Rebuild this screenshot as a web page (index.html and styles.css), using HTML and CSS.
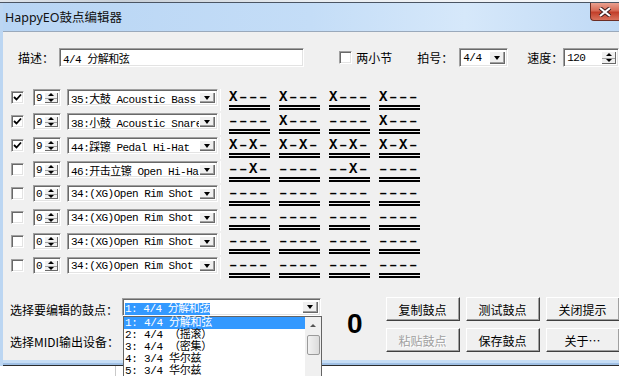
FILE: index.html
```html
<!DOCTYPE html>
<html lang="zh">
<head>
    <meta charset="UTF-8">
    <title>HappyEO鼓点编辑器</title>
    <link rel="stylesheet" href="styles.css">
</head>
<body>
<div class="screen">
    <div class="topstrip"></div>
    <div class="window">
        <div class="titlebar">
            <span class="title">HappyEO鼓点编辑器</span>
            <span class="close">
                <svg width="14" height="10" viewBox="0 0 14 10"><path d="M2 1 L12 9 M12 1 L2 9" stroke="#3a1a1a" stroke-width="4"/><path d="M2 1 L12 9 M12 1 L2 9" stroke="#fff" stroke-width="2.2"/></svg>
            </span>
        </div>
        <div class="client">
            <div class="toprow">
                <span class="label lbl-desc">描述：</span>
                <div class="field desc">4/4 分解和弦</div>
                <span class="check chk-two"></span>
                <span class="label lbl-two">两小节</span>
                <span class="label lbl-beat">拍号：</span>
                <div class="field combo beat"><span class="ctext">4/4</span><span class="arrowbtn"><i class="tri-down"></i></span></div>
                <span class="label lbl-speed">速度：</span>
                <div class="field spin speed"><span class="ctext">120</span><span class="spinbtn"><i class="tri-up"></i><i class="tri-down small"></i></span></div>
            </div>

            <div class="rows">
                <div class="row">
                    <span class="check on"><svg width="9" height="9" viewBox="0 0 9 9"><path d="M1 4 L3.5 6.5 L8 1.5" stroke="#000" stroke-width="1.8" fill="none"/></svg></span>
                    <div class="field spin small-spin"><span class="ctext">9</span><span class="spinbtn"><i class="tri-up"></i><i class="tri-down small"></i></span></div>
                    <div class="field combo instr"><span class="ctext">35:大鼓 Acoustic Bass</span><span class="arrowbtn"><i class="tri-down"></i></span></div>
                    <span class="sep"></span>
                    <div class="pattern">
                        <div class="cell"><span class="beats">X–––</span><span class="bars"></span></div>
                        <div class="cell"><span class="beats">X–––</span><span class="bars"></span></div>
                        <div class="cell"><span class="beats">X–––</span><span class="bars"></span></div>
                        <div class="cell"><span class="beats">X–––</span><span class="bars"></span></div>
                    </div>
                </div>
                <div class="row">
                    <span class="check on"><svg width="9" height="9" viewBox="0 0 9 9"><path d="M1 4 L3.5 6.5 L8 1.5" stroke="#000" stroke-width="1.8" fill="none"/></svg></span>
                    <div class="field spin small-spin"><span class="ctext">9</span><span class="spinbtn"><i class="tri-up"></i><i class="tri-down small"></i></span></div>
                    <div class="field combo instr"><span class="ctext">38:小鼓 Acoustic Snare</span><span class="arrowbtn"><i class="tri-down"></i></span></div>
                    <span class="sep"></span>
                    <div class="pattern">
                        <div class="cell"><span class="beats">––––</span><span class="bars"></span></div>
                        <div class="cell"><span class="beats">X–––</span><span class="bars"></span></div>
                        <div class="cell"><span class="beats">––––</span><span class="bars"></span></div>
                        <div class="cell"><span class="beats">X–––</span><span class="bars"></span></div>
                    </div>
                </div>
                <div class="row">
                    <span class="check on"><svg width="9" height="9" viewBox="0 0 9 9"><path d="M1 4 L3.5 6.5 L8 1.5" stroke="#000" stroke-width="1.8" fill="none"/></svg></span>
                    <div class="field spin small-spin"><span class="ctext">9</span><span class="spinbtn"><i class="tri-up"></i><i class="tri-down small"></i></span></div>
                    <div class="field combo instr"><span class="ctext">44:踩镲 Pedal Hi-Hat</span><span class="arrowbtn"><i class="tri-down"></i></span></div>
                    <span class="sep"></span>
                    <div class="pattern">
                        <div class="cell"><span class="beats">X–X–</span><span class="bars"></span></div>
                        <div class="cell"><span class="beats">X–X–</span><span class="bars"></span></div>
                        <div class="cell"><span class="beats">X–X–</span><span class="bars"></span></div>
                        <div class="cell"><span class="beats">X–X–</span><span class="bars"></span></div>
                    </div>
                </div>
                <div class="row">
                    <span class="check"></span>
                    <div class="field spin small-spin"><span class="ctext">9</span><span class="spinbtn"><i class="tri-up"></i><i class="tri-down small"></i></span></div>
                    <div class="field combo instr"><span class="ctext">46:开击立镲 Open Hi-Hat</span><span class="arrowbtn"><i class="tri-down"></i></span></div>
                    <span class="sep"></span>
                    <div class="pattern">
                        <div class="cell"><span class="beats">––X–</span><span class="bars"></span></div>
                        <div class="cell"><span class="beats">––––</span><span class="bars"></span></div>
                        <div class="cell"><span class="beats">––X–</span><span class="bars"></span></div>
                        <div class="cell"><span class="beats">––––</span><span class="bars"></span></div>
                    </div>
                </div>
                <div class="row">
                    <span class="check"></span>
                    <div class="field spin small-spin"><span class="ctext">0</span><span class="spinbtn"><i class="tri-up"></i><i class="tri-down small"></i></span></div>
                    <div class="field combo instr"><span class="ctext">34:(XG)Open Rim Shot</span><span class="arrowbtn"><i class="tri-down"></i></span></div>
                    <span class="sep"></span>
                    <div class="pattern">
                        <div class="cell"><span class="beats">––––</span><span class="bars"></span></div>
                        <div class="cell"><span class="beats">––––</span><span class="bars"></span></div>
                        <div class="cell"><span class="beats">––––</span><span class="bars"></span></div>
                        <div class="cell"><span class="beats">––––</span><span class="bars"></span></div>
                    </div>
                </div>
                <div class="row">
                    <span class="check"></span>
                    <div class="field spin small-spin"><span class="ctext">0</span><span class="spinbtn"><i class="tri-up"></i><i class="tri-down small"></i></span></div>
                    <div class="field combo instr"><span class="ctext">34:(XG)Open Rim Shot</span><span class="arrowbtn"><i class="tri-down"></i></span></div>
                    <span class="sep"></span>
                    <div class="pattern">
                        <div class="cell"><span class="beats">––––</span><span class="bars"></span></div>
                        <div class="cell"><span class="beats">––––</span><span class="bars"></span></div>
                        <div class="cell"><span class="beats">––––</span><span class="bars"></span></div>
                        <div class="cell"><span class="beats">––––</span><span class="bars"></span></div>
                    </div>
                </div>
                <div class="row">
                    <span class="check"></span>
                    <div class="field spin small-spin"><span class="ctext">0</span><span class="spinbtn"><i class="tri-up"></i><i class="tri-down small"></i></span></div>
                    <div class="field combo instr"><span class="ctext">34:(XG)Open Rim Shot</span><span class="arrowbtn"><i class="tri-down"></i></span></div>
                    <span class="sep"></span>
                    <div class="pattern">
                        <div class="cell"><span class="beats">––––</span><span class="bars"></span></div>
                        <div class="cell"><span class="beats">––––</span><span class="bars"></span></div>
                        <div class="cell"><span class="beats">––––</span><span class="bars"></span></div>
                        <div class="cell"><span class="beats">––––</span><span class="bars"></span></div>
                    </div>
                </div>
                <div class="row">
                    <span class="check"></span>
                    <div class="field spin small-spin"><span class="ctext">0</span><span class="spinbtn"><i class="tri-up"></i><i class="tri-down small"></i></span></div>
                    <div class="field combo instr"><span class="ctext">34:(XG)Open Rim Shot</span><span class="arrowbtn"><i class="tri-down"></i></span></div>
                    <span class="sep"></span>
                    <div class="pattern">
                        <div class="cell"><span class="beats">––––</span><span class="bars"></span></div>
                        <div class="cell"><span class="beats">––––</span><span class="bars"></span></div>
                        <div class="cell"><span class="beats">––––</span><span class="bars"></span></div>
                        <div class="cell"><span class="beats">––––</span><span class="bars"></span></div>
                    </div>
                </div>
            </div>

            <div class="bottom">
                <div class="selects">
                    <div class="selrow">
                        <span class="label lbl-pick">选择要编辑的鼓点：</span>
                        <div class="field combo pick">
                            <span class="ctext"><span class="selected">1: 4/4 分解和弦</span></span>
                            <span class="arrowbtn"><i class="tri-down"></i></span>
                            <div class="droplist">
                                <div class="items">
                                    <div class="item active">1: 4/4 分解和弦</div>
                                    <div class="item">2: 4/4 （摇滚）</div>
                                    <div class="item">3: 4/4 （密集）</div>
                                    <div class="item">4: 3/4 华尔兹</div>
                                    <div class="item">5: 3/4 华尔兹</div>
                                </div>
                                <div class="scrollbar">
                                    <span class="sb-up"><i class="tri-up"></i></span>
                                    <span class="sb-thumb"></span>
                                </div>
                            </div>
                        </div>
                    </div>
                    <span class="label lbl-midi">选择MIDI输出设备：</span>
                </div>
                <div class="count">0</div>
                <div class="buttons">
                    <button class="btn">复制鼓点</button>
                    <button class="btn">测试鼓点</button>
                    <button class="btn">关闭提示</button>
                    <button class="btn disabled">粘贴鼓点</button>
                    <button class="btn">保存鼓点</button>
                    <button class="btn">关于…</button>
                </div>
            </div>
        </div>
        <div class="frame-bottom"></div>
    </div>
    <div class="below"><span class="below-split"></span></div>
</div>
</body>
</html>
```
FILE: styles.css
```css
*{
    margin: 0px;
    padding: 0px;
    box-sizing: border-box;
}
body{
    width: 619px;
    height: 376px;
    overflow: hidden;
    background: #fff;
    font-family: "Noto Sans CJK SC", sans-serif;
    font-size: 12px;
    color: #000;
}
.screen{
    height: 376px;
    display: flex;
    flex-direction: column;
}
.topstrip{
    height: 3px;
    background: linear-gradient(to right, #dfe4ea, #c8cfd7 20%, #e9edf1 50%, #f6f7f9);
    border-bottom: 1px solid #4b5563;
}
.window{
    border-left: 3px solid #bcd6f2;
    box-shadow: inset 1px 0 0 #7f9dc4;
}
.titlebar{
    height: 28px;
    display: flex;
    align-items: center;
    justify-content: space-between;
    background: linear-gradient(to right, #b8d5f4, #c4ddf7 50%, #d6e8fa 75%, #bfd9f5);
}
.title{
    padding-left: 2px;
    margin-top: -2px;
    font-family: "Noto Sans", "Noto Sans CJK SC", sans-serif;
    font-size: 12.5px;
    color: #111;
}
.close{
    align-self: flex-start;
    width: 29px;
    height: 18px;
    display: flex;
    align-items: center;
    justify-content: center;
    border: 1px solid #6b2d24;
    border-right: none;
    border-top: none;
    border-radius: 0 0 0 4px;
    background: linear-gradient(to bottom, #e9a08f, #d66a55 45%, #c23f2a 55%, #d9735c);
}
.client{
    height: 329px;
    background: #f0f0f0;
    border-top: 1px solid #9aa9bb;
    padding: 15px 0 0 8px;
}
.frame-bottom{
    height: 6px;
    background: linear-gradient(to bottom, #c6ddf5 0, #c6ddf5 3px, #9fbfe4 3px, #9fbfe4 5px, #2b2b2b 5px);
}
.below{
    flex: 1;
    background: #fff;
    position: relative;
}
.below-split{
    position: absolute;
    left: 115px;
    top: 0;
    bottom: 0;
    border-left: 1px solid #c9c9c9;
}

/* generic controls */
.label{
    line-height: 19px;
    white-space: nowrap;
}
.field{
    background: #fff;
    border-top: 1px solid #a0a0a0;
    border-left: 1px solid #a0a0a0;
    border-right: 1px solid #fff;
    border-bottom: 1px solid #fff;
    box-shadow: inset 1px 1px 0 #696969, inset -1px -1px 0 #e3e3e3;
    display: flex;
    align-items: center;
    font-family: "Liberation Mono", "Noto Sans CJK SC", monospace;
    font-size: 11px;
    letter-spacing: -0.5px;
    position: relative;
}
.ctext{
    flex: 1;
    padding-left: 3px;
    white-space: nowrap;
    overflow: hidden;
}
.arrowbtn{
    width: 16px;
    height: 100%;
    border: 2px solid;
    border-color: #f0f0f0 #f0f0f0 #f0f0f0 #f0f0f0;
    background: #f0f0f0;
    box-shadow: inset 1px 1px 0 #fff, inset -1px -1px 0 #696969;
    display: flex;
    align-items: center;
    justify-content: center;
    margin-right: 1px;
    background-clip: padding-box;
}
.field .arrowbtn{
    border: none;
    height: calc(100% - 4px);
    margin: 2px 2px 2px 0;
    box-shadow: inset 1px 1px 0 #fff, inset -1px -1px 0 #696969, inset -2px -2px 0 #a0a0a0;
}
.spinbtn{
    width: 14px;
    height: calc(100% - 4px);
    margin: 2px 2px 2px 0;
    display: flex;
    flex-direction: column;
    align-items: center;
    justify-content: space-around;
    background: #f0f0f0;
    box-shadow: inset 1px 1px 0 #fff, inset -1px -1px 0 #696969;
    position: relative;
}
.spinbtn::after{
    content: "";
    position: absolute;
    left: 1px;
    right: 1px;
    top: 50%;
    border-top: 1px solid #a0a0a0;
}
.tri-down{
    width: 0;
    height: 0;
    border-left: 3.5px solid transparent;
    border-right: 3.5px solid transparent;
    border-top: 4px solid #000;
}
.tri-down.small{
    border-left-width: 3px;
    border-right-width: 3px;
    border-top-width: 3px;
}
.tri-up{
    width: 0;
    height: 0;
    border-left: 3px solid transparent;
    border-right: 3px solid transparent;
    border-bottom: 3px solid #000;
}
.check{
    width: 13px;
    height: 13px;
    background: #fff;
    border-top: 1px solid #a0a0a0;
    border-left: 1px solid #a0a0a0;
    border-right: 1px solid #fff;
    border-bottom: 1px solid #fff;
    box-shadow: inset 1px 1px 0 #696969, inset -1px -1px 0 #e3e3e3;
    display: flex;
    align-items: center;
    justify-content: center;
    flex: none;
}

/* top row */
.toprow{
    display: flex;
    align-items: center;
    height: 19px;
    margin-top: 1px;
}
.lbl-desc{ margin-left: 7px; width: 41px; }
.desc{
    width: 246px;
    height: 19px;
    padding-left: 3px;
}
.chk-two{ margin-left: 35px; }
.lbl-two{ margin-left: 4px; width: 36px; }
.lbl-beat{ margin-left: 25px; width: 42px; }
.beat{ width: 49px; height: 19px; }
.lbl-speed{ margin-left: 19px; width: 36px; }
.speed{ width: 56px; height: 19px; }
.speed .spinbtn{ width: 15px; }

/* instrument rows */
.rows{
    margin-top: 22px;
    display: flex;
    flex-direction: column;
}
.row{
    height: 24px;
    display: flex;
    align-items: flex-start;
}
.row .check{
    margin-top: 2px;
}
.small-spin{
    margin-left: 9px;
    width: 28px;
    height: 17px;
}
.small-spin .ctext{
    padding-left: 2px;
}
.instr{
    margin-left: 6px;
    width: 151px;
    height: 17px;
}
.sep{
    margin-left: 2px;
    width: 1px;
    height: 22px;
    background: #fff;
}
.pattern{
    margin-left: 8px;
    display: flex;
    gap: 9px;
    margin-top: 1px;
}
.cell{
    width: 41px;
    display: flex;
    flex-direction: column;
}
.beats{
    height: 15px;
    line-height: 15px;
    font-family: "Liberation Mono", monospace;
    font-weight: bold;
    font-size: 14px;
    letter-spacing: 1.6px;
    white-space: nowrap;
    overflow: hidden;
}
.bars{
    height: 5px;
    border-top: 2px solid #000;
    border-bottom: 2px solid #000;
}

/* bottom area */
.bottom{
    margin-top: 16px;
    display: flex;
    align-items: flex-start;
}
.selects{
    display: flex;
    flex-direction: column;
}
.selrow{
    display: flex;
    margin-top: 1px;
}
.lbl-pick{
    width: 112px;
    line-height: 24px;
    margin-left: -1px;
}
.lbl-midi{
    margin-top: 10px;
    margin-left: -1px;
}
.pick{
    width: 199px;
    height: 18px;
}
.pick .ctext{
    padding-left: 2px;
}
.selected{
    background: #3399ff;
    color: #fff;
}
.droplist{
    position: absolute;
    top: 17px;
    left: 0;
    width: 199px;
    height: 70px;
    z-index: 5;
    background: #fff;
    border: 1px solid #646464;
    display: flex;
    letter-spacing: -0.3px;
}
.items{
    flex: 1;
}
.item{
    height: 12px;
    line-height: 12px;
    padding-left: 1px;
    white-space: nowrap;
}
.item.active{
    background: #3399ff;
    color: #fff;
}
.scrollbar{
    width: 16px;
    background: #f0f0f0;
    display: flex;
    flex-direction: column;
    align-items: center;
}
.sb-up{
    height: 16px;
    display: flex;
    align-items: center;
    justify-content: center;
}
.sb-up .tri-up{
    border-bottom-color: #555;
}
.sb-thumb{
    width: 13px;
    height: 20px;
    margin-top: 2px;
    border: 1px solid #9a9a9a;
    border-radius: 2px;
    background: linear-gradient(to right, #f2f2f2, #dcdcdc);
}
.count{
    margin-left: 26px;
    margin-top: 12px;
    font-family: "Liberation Sans", sans-serif;
    font-weight: bold;
    font-size: 28px;
    line-height: 30px;
}
.buttons{
    margin-left: 23px;
    display: grid;
    grid-template-columns: repeat(3, 74px);
    grid-auto-rows: 24px;
    column-gap: 6px;
    row-gap: 7px;
}
.btn{
    font-family: "Noto Sans CJK SC", sans-serif;
    font-size: 12px;
    background: #f0f0f0;
    border: 1px solid;
    border-color: #fff #404040 #404040 #fff;
    box-shadow: inset -1px -1px 0 #a0a0a0;
    color: #000;
}
.btn.disabled{
    color: #a0a0a0;
    text-shadow: 1px 1px 0 #fff;
}
```
